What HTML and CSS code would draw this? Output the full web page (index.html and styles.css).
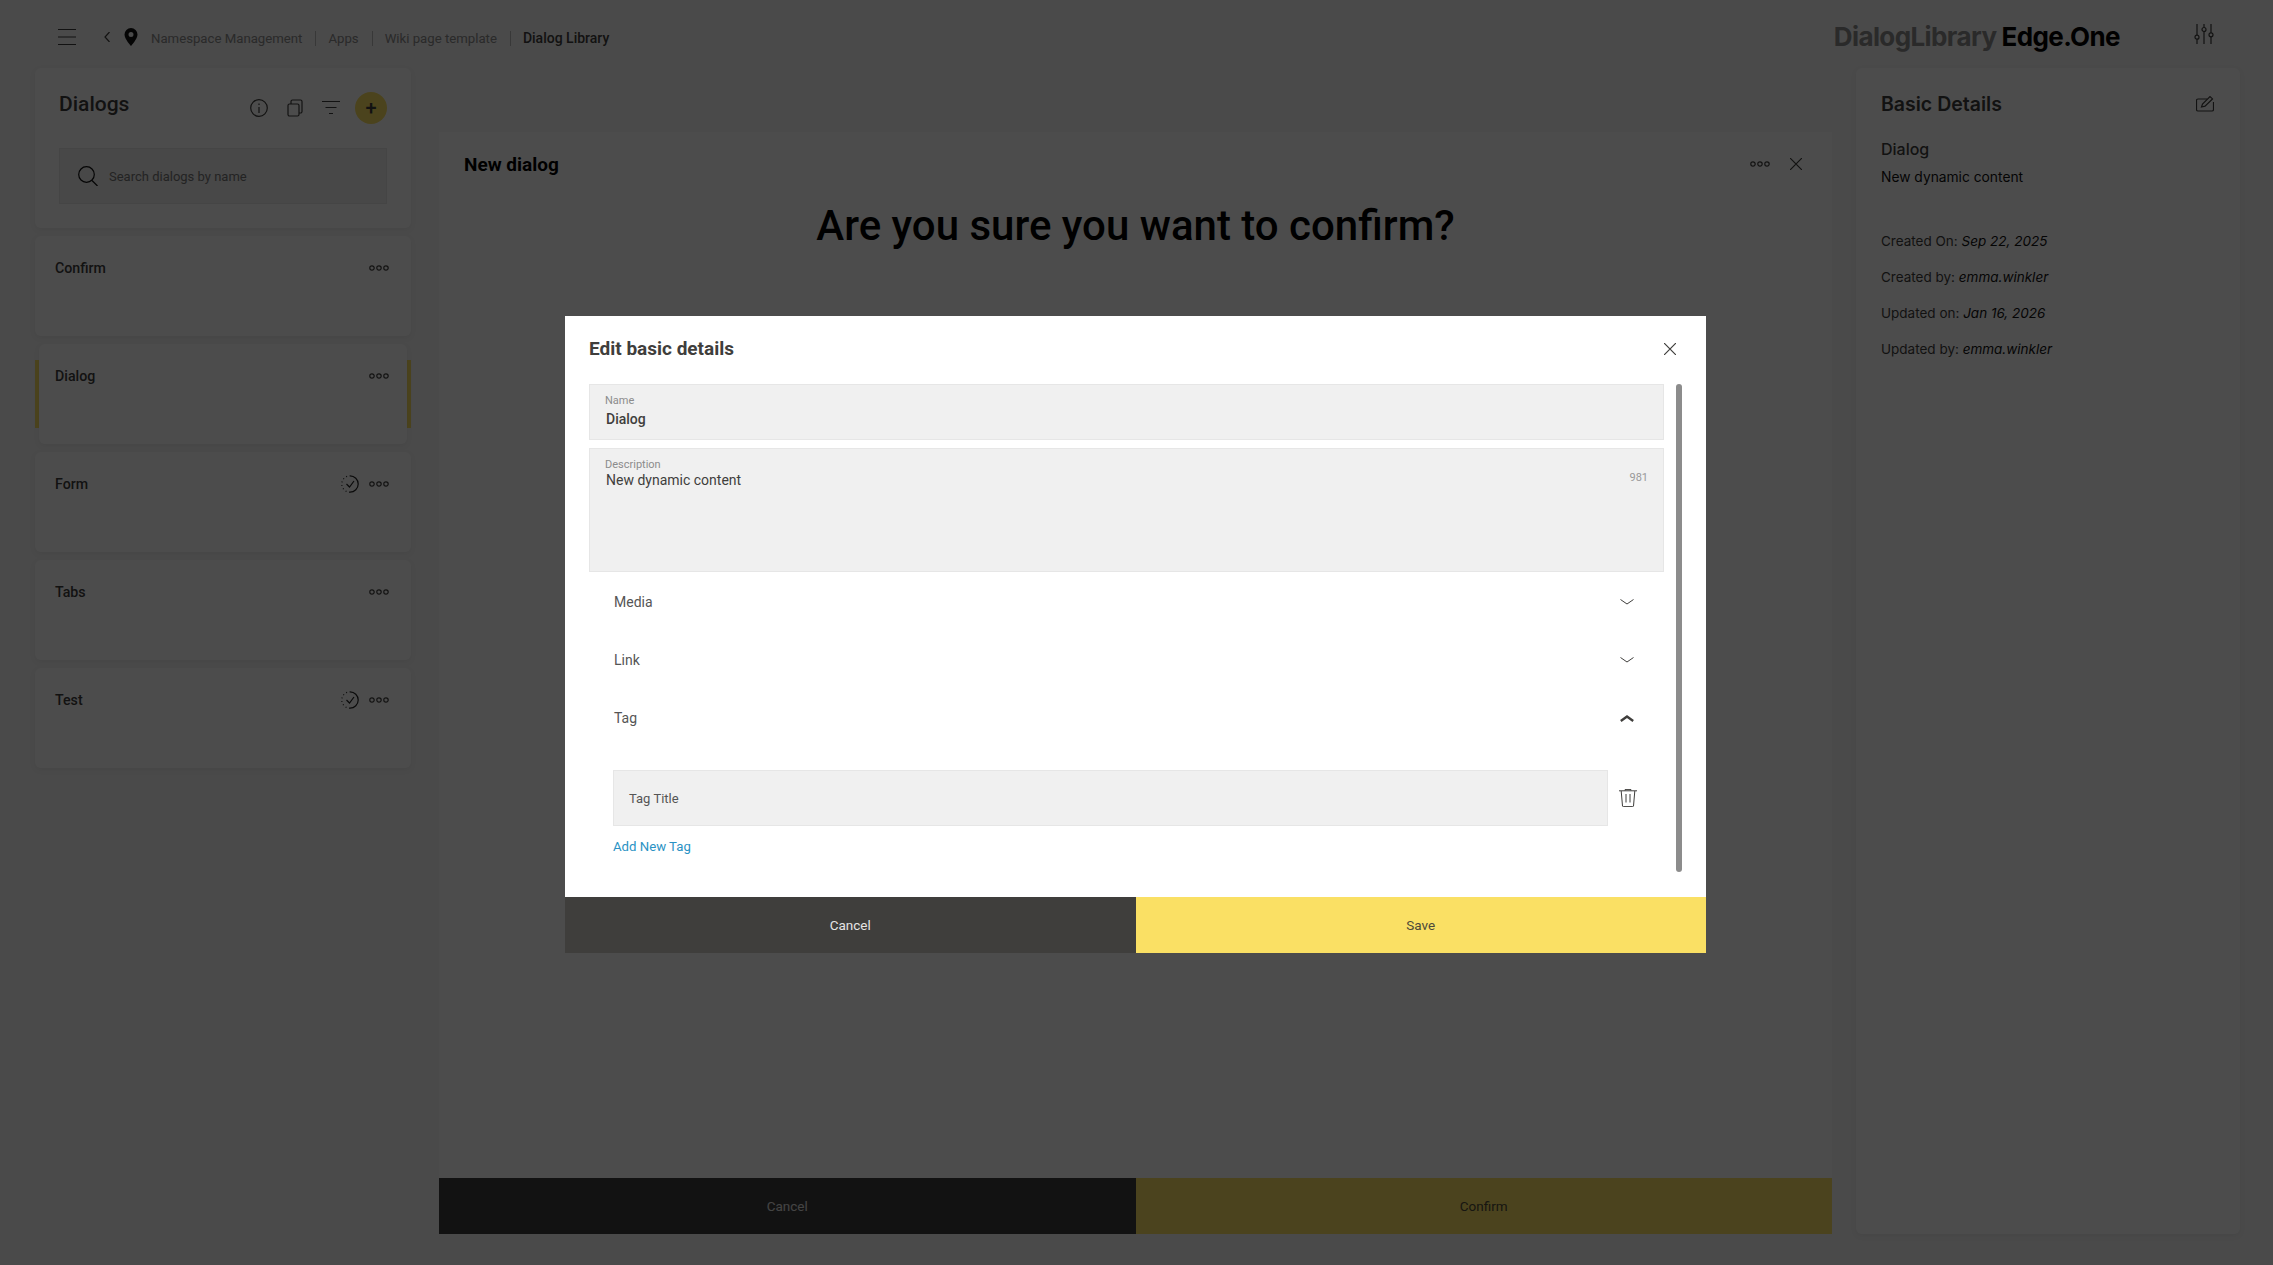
FILE: index.html
```html
<!DOCTYPE html>
<html lang="en">
<head>
  <meta charset="UTF-8" />
  <title>Dialog Library</title>
  <link rel="stylesheet" href="styles.css">
</head>
<body>
  <header class="topbar">
    <svg class="icon-menu" viewBox="0 0 18 16" width="18" height="16"><path d="M0 .5h18M0 8h18M0 15.500h18" /></svg>
    <svg class="icon-back" viewBox="0 0 6 10" width="6" height="10"><path d="M5.500 0 1 5l4.500 5" /></svg>
    <svg class="icon-pin" viewBox="0 0 14 18" width="14" height="18"><path fill-rule="evenodd" d="M7 0a6.500 6.500 0 0 0-6.500 6.500C.5 11 7 18 7 18s6.500-7 6.500-11.500A6.500 6.500 0 0 0 7 0Zm0 4a2.500 2.500 0 1 1 0 5 2.500 2.500 0 0 1 0-5Z" /></svg>
    <nav class="crumbs">
      <span>Namespace Management</span>
      <span>Apps</span>
      <span>Wiki page template</span>
      <span class="crumb-current">Dialog Library</span>
    </nav>
    <div class="brand"><span class="brand-light">DialogLibrary</span><span class="brand-name">Edge.One</span></div>
    <svg class="icon-sliders" viewBox="0 0 20 20" width="20" height="20">
      <path d="M3 0v11.500M3 15v5M10 0v3.500M10 7v13M17 0v9M17 12.500V20" />
      <circle cx="3" cy="13.200" r="2" /><circle cx="10" cy="5.500" r="2" /><circle cx="17" cy="10.800" r="2" />
    </svg>
  </header>

  <main class="layout">
    <aside class="sidebar">
      <section class="panel list-head">
        <div class="list-title">
          <h2>Dialogs</h2>
          <svg class="tool" viewBox="0 0 18 18" width="18" height="18"><circle cx="9" cy="9" r="8.300" /><path d="M9 8v6M9 4.500v1.500" /></svg>
          <svg class="tool" viewBox="0 0 18 18" width="18" height="18"><rect x="2" y="5" width="11" height="12" rx="1.500" /><path d="M5 5V2.500A1.500 1.500 0 0 1 6.500 1H14.500A1.500 1.500 0 0 1 16 2.500v10a1.500 1.500 0 0 1-1.500 1.500H13" /></svg>
          <svg class="tool" viewBox="0 0 18 18" width="18" height="18"><path d="M0 2.500h18M3.500 8.500h11M7 14.500h4" /></svg>
          <button class="add-btn" type="button">+</button>
        </div>
        <div class="search">
          <svg viewBox="0 0 20 20" width="20" height="20"><circle cx="8.500" cy="8.500" r="7.800" /><path d="M14 14.500l5.500 5.500" /></svg>
          <span>Search dialogs by name</span>
        </div>
      </section>

      <article class="panel card"><h3>Confirm</h3><svg class="dots" viewBox="0 0 20 6" width="20" height="6"><circle cx="3" cy="3" r="2.200" /><circle cx="10" cy="3" r="2.200" /><circle cx="17" cy="3" r="2.200" /></svg></article>
      <div class="card-selected">
        <article class="panel card"><h3>Dialog</h3><svg class="dots" viewBox="0 0 20 6" width="20" height="6"><circle cx="3" cy="3" r="2.200" /><circle cx="10" cy="3" r="2.200" /><circle cx="17" cy="3" r="2.200" /></svg></article>
      </div>
      <article class="panel card"><h3>Form</h3>
        <svg class="check" viewBox="0 0 18 18" width="18" height="18"><path d="M9 .8a8.200 8.200 0 0 1 0 16.400" /><path stroke-dasharray="1 2.600" d="M9 17.200A8.200 8.200 0 0 1 9 .8" /><path d="M5.500 9l3 3 4.500-6" /></svg>
        <svg class="dots" viewBox="0 0 20 6" width="20" height="6"><circle cx="3" cy="3" r="2.200" /><circle cx="10" cy="3" r="2.200" /><circle cx="17" cy="3" r="2.200" /></svg></article>
      <article class="panel card"><h3>Tabs</h3><svg class="dots" viewBox="0 0 20 6" width="20" height="6"><circle cx="3" cy="3" r="2.200" /><circle cx="10" cy="3" r="2.200" /><circle cx="17" cy="3" r="2.200" /></svg></article>
      <article class="panel card"><h3>Test</h3>
        <svg class="check" viewBox="0 0 18 18" width="18" height="18"><path d="M9 .8a8.200 8.200 0 0 1 0 16.400" /><path stroke-dasharray="1 2.600" d="M9 17.200A8.200 8.200 0 0 1 9 .8" /><path d="M5.500 9l3 3 4.500-6" /></svg>
        <svg class="dots" viewBox="0 0 20 6" width="20" height="6"><circle cx="3" cy="3" r="2.200" /><circle cx="10" cy="3" r="2.200" /><circle cx="17" cy="3" r="2.200" /></svg></article>
    </aside>

    <section class="preview">
      <div class="preview-head">
        <h2>New dialog</h2>
        <svg class="dots" viewBox="0 0 20 6" width="20" height="6"><circle cx="3" cy="3" r="2.200" /><circle cx="10" cy="3" r="2.200" /><circle cx="17" cy="3" r="2.200" /></svg>
        <svg class="icon-close" viewBox="0 0 12 12" width="12" height="12"><path d="M0 0l12 12M12 0 0 12" /></svg>
      </div>
      <h1>Are you sure you want to confirm?</h1>
      <div class="actions">
        <button class="btn-dark" type="button">Cancel</button>
        <button class="btn-yellow" type="button">Confirm</button>
      </div>
    </section>

    <aside class="panel details">
      <div class="details-head">
        <h2>Basic Details</h2>
        <svg class="icon-edit" viewBox="0 0 18 16" width="18" height="16"><path d="M11 3H2a1.500 1.500 0 0 0-1.500 1.500v9A1.500 1.500 0 0 0 2 15h14a1.500 1.500 0 0 0 1.500-1.500V6" /><path d="M5.500 11l1-3L14 .6l2.500 2.300L9 10.200z" /></svg>
      </div>
      <h3>Dialog</h3>
      <p class="details-desc">New dynamic content</p>
      <ul class="meta">
        <li>Created On: <em>Sep 22, 2025</em></li>
        <li>Created by: <em>emma.winkler</em></li>
        <li>Updated on: <em>Jan 16, 2026</em></li>
        <li>Updated by: <em>emma.winkler</em></li>
      </ul>
    </aside>
  </main>

  <div class="overlay">
    <div class="modal">
      <div class="modal-head">
        <h2>Edit basic details</h2>
        <svg class="icon-close" viewBox="0 0 12 12" width="12" height="12"><path d="M0 0l12 12M12 0 0 12" /></svg>
      </div>
      <div class="modal-body">
        <div class="modal-fields">
          <div class="field field-name">
            <label>Name</label>
            <div class="field-value">Dialog</div>
          </div>
          <div class="field field-desc">
            <label>Description</label>
            <div class="field-text">New dynamic content</div>
            <span class="counter">981</span>
          </div>
          <div class="accordion"><span>Media</span><svg class="chev" viewBox="0 0 14 6" width="14" height="6"><path d="M.5.5 7 5 13.500.5" /></svg></div>
          <div class="accordion"><span>Link</span><svg class="chev" viewBox="0 0 14 6" width="14" height="6"><path d="M.5.5 7 5 13.500.5" /></svg></div>
          <div class="accordion"><span>Tag</span><svg class="chev chev-open" viewBox="0 0 14 7" width="14" height="7"><path d="M.8 6 7 1.500 13.200 6" /></svg></div>
          <div class="tag-row">
            <div class="tag-input">Tag Title</div>
            <svg class="icon-trash" viewBox="0 0 18 18" width="18" height="18"><path d="M0 1.800h18M6 1.500V.6h6v.9M2.200 2l1.300 15a.8.8 0 0 0 .8.6h9.400a.8.8 0 0 0 .8-.6L15.800 2M7 5v8.500M11 5v8.500" /></svg>
          </div>
          <a class="add-tag" href="#">Add New Tag</a>
        </div>
        <div class="scrollbar"></div>
      </div>
      <div class="actions">
        <button class="btn-dark" type="button">Cancel</button>
        <button class="btn-yellow" type="button">Save</button>
      </div>
    </div>
  </div>
</body>
</html>
```

FILE: styles.css
```css
* { box-sizing: border-box; }
html, body { height: 100%; }
body { margin: 0; background: #f7f7f7; color: #3f3e3c; font-family: Roboto, sans-serif; overflow: hidden; }
h1, h2, h3, p, ul { margin: 0; padding: 0; }
svg { display: block; flex: none; fill: none; stroke: #3f3e3c; stroke-width: 1.2; }

/* top bar */
.topbar { height: 68px; display: flex; align-items: center; padding: 8px 59px 0 58px; }
.icon-menu { margin: -2px 28px 0 0; }
.icon-back { margin: -2px 15px 0 0; }
.icon-pin { fill: #111; stroke: none; margin: -3px 13px 0 -1px; }
.crumbs { display: flex; align-items: center; font-size: 13.2px; color: #8c8c8c; }
.crumbs span { padding-right: 13px; margin-right: 12px; border-right: 1px solid #bbb; line-height: 15px; }
.crumbs .crumb-current { border: 0; color: #3f3e3c; font-size: 14px; font-weight: 500; margin: 0; padding: 0; }
.brand { display: flex; gap: 5px; margin: -4px 74px 0 auto; font-family: Inter, sans-serif; font-size: 26px; font-weight: 700; letter-spacing: -0.6px; color: #000; white-space: nowrap; }
.brand-light { color: #8c8c8c; }
.icon-sliders { margin-top: -8px; }
.icon-sliders circle { fill: #f7f7f7; }

/* columns */
.layout { height: 1197px; display: flex; padding: 0 33px 31px 35px; }
.panel { background: #fff; border-radius: 6px; box-shadow: 0 2px 6px rgba(0, 0, 0, .06); }
.sidebar { width: 376px; flex: none; display: flex; flex-direction: column; gap: 8px; margin-right: 28px; }
.list-head { height: 160px; padding: 24px 24px 0; }
.list-title { display: flex; align-items: center; height: 32px; }
.list-title h2 { font-size: 21px; font-weight: 500; margin-right: auto; margin-top: -8px; }
.tool { margin-right: 18px; }
.tool:nth-of-type(3) { margin-right: 15px; }
.add-btn { width: 32px; height: 32px; border: 0; border-radius: 50%; padding: 0; background: #fbe062; color: #3f3e3c; font: 500 20px Roboto, sans-serif; }
.search { margin-top: 24px; height: 56px; display: flex; align-items: center; gap: 11px; padding-left: 18px; background: #f0f0f0; border: 1px solid #e6e6e6; font-size: 13px; color: #777; }
.search svg { stroke: #111; }
.card { height: 100px; display: flex; align-items: flex-start; gap: 10px; padding: 24px 22px 0 20px; }
.card h3 { font-size: 14.2px; font-weight: 500; margin-right: auto; line-height: 17px; }
.card .dots { margin-top: 5px; }
.card .check { margin-top: -1px; stroke: #222; }
.card-selected { position: relative; height: 100px; }
.card-selected::before { content: ""; display: block; position: absolute; top: 16px; bottom: 16px; left: 0; right: 0; background: #fbe062; }
.card-selected .card { position: relative; margin: 0 4px; padding-left: 16px; padding-right: 18px; }

/* center preview */
.preview { flex: 1; margin: 64px 24px 0 0; background: #fff; display: flex; flex-direction: column; }
.preview-head { display: flex; align-items: center; gap: 20px; height: 64px; padding: 0 30px 0 25px; }
.preview-head h2 { font-size: 19px; font-weight: 700; margin-right: auto; color: #000; }
.preview h1 { margin-top: 6px; text-align: center; font-size: 42px; font-weight: 500; line-height: 48px; color: #000; }
.preview .actions { margin-top: auto; }
.actions { display: flex; height: 56px; flex: none; }
.actions button { flex: 1; border: 0; padding: 0; font: 400 13.5px Roboto, sans-serif; }
.btn-dark { background: #3f3e3c; color: #e4e4e4; }
.btn-yellow { background: #fae064; color: #4d4a3a; }

/* right details */
.details { width: 384px; flex: none; padding: 24px 25px 0; font-family: Inter, sans-serif; }
.details-head { display: flex; align-items: center; justify-content: space-between; height: 24px; }
.details-head h2 { font-size: 19.5px; font-weight: 600; }
.details-head .icon-edit { margin-right: 1px; }
.details h3 { margin-top: 23px; font-size: 16px; font-weight: 500; line-height: 20px; }
.details-desc { margin-top: 9px; font-size: 13.8px; line-height: 18px; color: #111; }
.meta { margin-top: 46px; list-style: none; font-size: 13.5px; line-height: 18px; }
.meta li { margin-bottom: 18px; }
.meta em { color: #111; }

/* modal on top of a dark backdrop */
.overlay { position: fixed; inset: 0; background: rgba(0, 0, 0, .7); display: flex; justify-content: center; align-items: flex-start; padding: 316px 2px 0 0; }
.modal { width: 1141px; height: 637px; background: #fff; display: flex; flex-direction: column; }
.modal-head { height: 68px; flex: none; display: flex; align-items: center; justify-content: space-between; padding: 0 30px 3px 24px; }
.modal-head h2 { font-size: 19px; font-weight: 700; color: #3f3e3c; }
.modal-body { flex: 1; display: flex; gap: 12px; padding-left: 24px; }
.modal-fields { width: 1075px; flex: none; }
.scrollbar { width: 6px; height: 488px; border-radius: 3px; background: #8c8c8c; }
.field { background: #f0f0f0; border: 1px solid #e6e6e6; padding-left: 15px; position: relative; }
.field label { display: block; font-size: 11px; line-height: 14px; color: #8c8c8c; }
.field-name { height: 56px; padding-top: 9px; margin-bottom: 8px; }
.field-value { font-size: 14px; font-weight: 500; line-height: 18px; margin-top: 2px; padding-left: 1px; }
.field-desc { height: 124px; padding-top: 9px; }
.field-text { font-size: 14px; line-height: 16px; padding-left: 1px; }
.counter { position: absolute; right: 15px; top: 22px; font-size: 11px; color: #999; }
.accordion { height: 58px; display: flex; align-items: center; justify-content: space-between; padding: 0 30px 0 25px; font-size: 14px; color: #555; }
.accordion:nth-of-type(3) { margin-top: 1px; }
.chev { stroke-width: 1; }
.chev-open { stroke-width: 2.4; }
.tag-row { display: flex; align-items: center; margin: 23px 0 0 24px; }
.tag-input { width: 995px; height: 56px; display: flex; align-items: center; padding-left: 15px; background: #f0f0f0; border: 1px solid #e6e6e6; font-size: 13px; color: #555; }
.icon-trash { margin-left: 11px; stroke-width: 1; }
.add-tag { display: block; margin: 13px 0 0 24px; font-size: 13.2px; color: #2a92c4; text-decoration: none; }
```
